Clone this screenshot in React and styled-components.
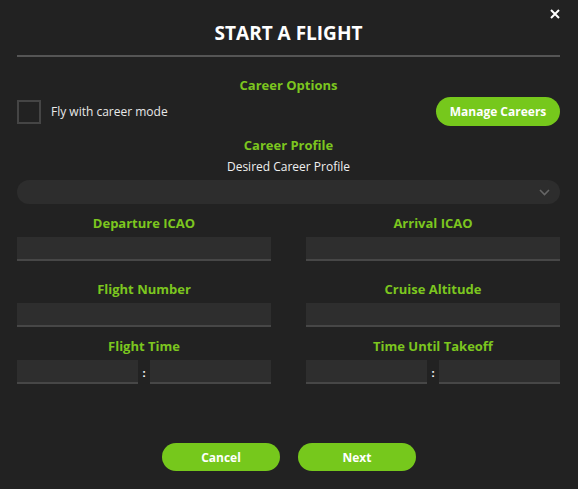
import React from 'react';
import styled, { createGlobalStyle } from 'styled-components';

const GlobalStyle = createGlobalStyle`
    html, body {
        margin: 0;
        padding: 0;
        background: #222222;
    }

    body {
        font-family: "Open Sans", "Noto Sans", sans-serif;
        color: #ffffff;
    }
`

const green = '#7cc61f';

const App = () => {
    return (
        <Wrapper>
            <GlobalStyle />

            <Close aria-label="close">
                <svg width="10" height="10" viewBox="0 0 10 10">
                    <path d="M1 1 L9 9 M9 1 L1 9" stroke="#fff" strokeWidth="2" />
                </svg>
            </Close>

            <Title>START A FLIGHT</Title>
            <Divider />

            <SectionTitle mt={ 19 }>Career Options</SectionTitle>

            <OptionRow>
                <CheckLabel>
                    <Checkbox />
                    Fly with career mode
                </CheckLabel>

                <PillButton small>Manage Careers</PillButton>
            </OptionRow>

            <SectionTitle mt={ 10 }>Career Profile</SectionTitle>
            <SubLabel>Desired Career Profile</SubLabel>

            <Select>
                <svg width="11" height="7" viewBox="0 0 11 7">
                    <path d="M1 1 L5.5 5.5 L10 1" stroke="#666" strokeWidth="1.6" fill="none" />
                </svg>
            </Select>

            <FieldGrid mt={ 10 }>
                <Field>
                    <FieldLabel>Departure ICAO</FieldLabel>
                    <Input />
                </Field>
                <Field>
                    <FieldLabel>Arrival ICAO</FieldLabel>
                    <Input />
                </Field>
            </FieldGrid>

            <FieldGrid mt={ 19 }>
                <Field>
                    <FieldLabel>Flight Number</FieldLabel>
                    <Input />
                </Field>
                <Field>
                    <FieldLabel>Cruise Altitude</FieldLabel>
                    <Input />
                </Field>
            </FieldGrid>

            <FieldGrid mt={ 10 }>
                <Field>
                    <FieldLabel>Flight Time</FieldLabel>
                    <TimeRow>
                        <Input split />
                        <Colon>:</Colon>
                        <Input split />
                    </TimeRow>
                </Field>
                <Field>
                    <FieldLabel>Time Until Takeoff</FieldLabel>
                    <TimeRow>
                        <Input split />
                        <Colon>:</Colon>
                        <Input split />
                    </TimeRow>
                </Field>
            </FieldGrid>

            <Footer>
                <PillButton>Cancel</PillButton>
                <PillButton>Next</PillButton>
            </Footer>
        </Wrapper>
    );
}

export default App;

const Wrapper = styled.div`
    position: relative;
    box-sizing: border-box;
    width: 578px;
    height: 489px;
    padding: 21px 18px 0 17px;
    background: #222222;
`

const Close = styled.div`
    position: absolute;
    top: 9px;
    right: 18px;
    width: 10px;
    height: 10px;
    display: flex;
`

const Title = styled.div`
    font-size: 19px;
    line-height: 24px;
    font-weight: 700;
    text-align: center;
`

const Divider = styled.div`
    height: 2px;
    margin-top: 10px;
    background: #555555;
`

const SectionTitle = styled.div`
    margin-top: ${ props => props.mt }px;
    color: ${ green };
    font-size: 13px;
    line-height: 18px;
    font-weight: 700;
    text-align: center;
`

const OptionRow = styled.div`
    display: flex;
    align-items: center;
    justify-content: space-between;
    margin-top: 3px;
`

const CheckLabel = styled.label`
    display: flex;
    align-items: center;
    gap: 10px;
    font-size: 12px;
    color: #e8e8e8;
`

const Checkbox = styled.span`
    box-sizing: border-box;
    width: 24px;
    height: 24px;
    border: 2px solid #454545;
`

const PillButton = styled.button`
    box-sizing: border-box;
    width: ${ props => props.small ? 124 : 118 }px;
    height: ${ props => props.small ? 29 : 28 }px;
    padding: 0;
    border: none;
    border-radius: 15px;
    background: #76c81c;
    color: #ffffff;
    font-family: inherit;
    font-size: 12px;
    font-weight: 700;
`

const SubLabel = styled.div`
    margin-top: 5px;
    font-size: 12px;
    line-height: 16px;
    text-align: center;
    color: #f0f0f0;
`

const Select = styled.div`
    display: flex;
    align-items: center;
    justify-content: flex-end;
    height: 24px;
    margin-top: 5px;
    padding-right: 10px;
    border-radius: 12px;
    background: #2d2d2d;
`

const FieldGrid = styled.div`
    display: grid;
    grid-template-columns: 254px 254px;
    column-gap: 35px;
    margin-top: ${ props => props.mt }px;
`

const Field = styled.div`
    display: flex;
    flex-direction: column;
`

const FieldLabel = styled.div`
    color: ${ green };
    font-size: 13px;
    line-height: 18px;
    font-weight: 700;
    text-align: center;
    margin-bottom: 5px;
`

const Input = styled.div`
    box-sizing: border-box;
    flex: ${ props => props.split ? '1 1 0' : 'none' };
    height: 24px;
    background: #2e2e2e;
    border-bottom: 2px solid #474747;
`

const TimeRow = styled.div`
    display: flex;
    align-items: center;
`

const Colon = styled.span`
    width: 12px;
    text-align: center;
    font-size: 11px;
    font-weight: 700;
    color: #ffffff;
`

const Footer = styled.div`
    display: flex;
    justify-content: center;
    gap: 18px;
    margin-top: 59px;
    padding-left: 1px;
`
